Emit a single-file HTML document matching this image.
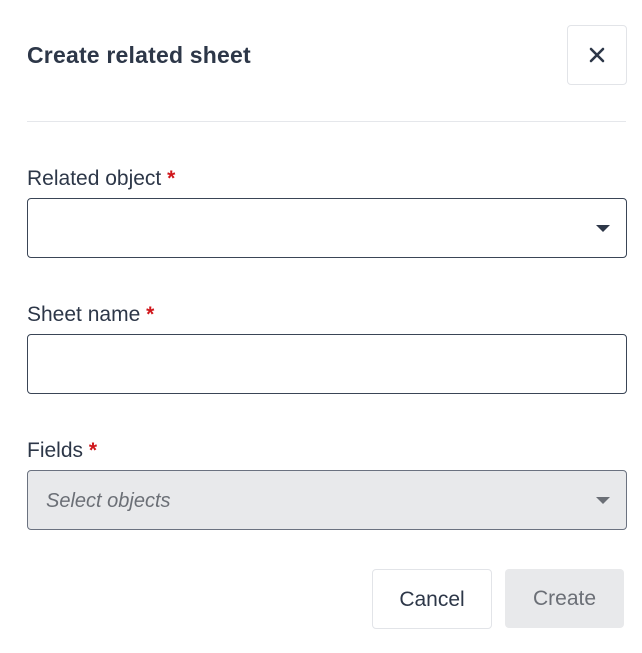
<!DOCTYPE html>
<html><head><style>
body{margin:0;width:642px;height:653px;background:#fff;font-family:"Liberation Sans",sans-serif;color:#2d3748;position:relative;overflow:hidden}
.a{position:absolute}
.title{left:27px;top:42px;font-size:23px;font-weight:bold;color:#2d3748;letter-spacing:0.2px}
.close{left:567px;top:25px;width:58px;height:58px;border:1px solid #e2e4e8;border-radius:4px}
.hr{left:27px;top:121px;width:599px;height:1px;background:#e5e7eb}
.lbl{left:27px;font-size:21px;color:#2d3748;letter-spacing:0px}
.lbl span{color:#d0161b;font-weight:bold}
.inp{left:27px;width:598px;height:58px;border:1px solid #3a4556;border-radius:4px;background:#fff}
.arr{position:absolute;right:16px;top:26px;width:0;height:0;border-left:7px solid transparent;border-right:7px solid transparent;border-top:7px solid #2d3748}
.btn{top:569px;height:58px;border-radius:4px;font-size:21px;text-align:center;line-height:60px}
</style></head><body>
<div class="a title">Create related sheet</div>
<div class="a close"><svg width="58" height="58" viewBox="0 0 58 58"><path d="M23 23L35 35M35 23L23 35" stroke="#2d3748" stroke-width="2.6" stroke-linecap="round"/></svg></div>
<div class="a hr"></div>
<div class="a lbl" style="top:167px">Related object <span>*</span></div>
<div class="a inp" style="top:198px"><div class="arr"></div></div>
<div class="a lbl" style="top:303px">Sheet name <span>*</span></div>
<div class="a inp" style="top:334px"></div>
<div class="a lbl" style="top:439px">Fields <span>*</span></div>
<div class="a inp" style="top:470px;background:#e8e9eb;border-color:#6b7280"><div style="position:absolute;left:18px;top:19px;font-size:20px;font-style:italic;color:#6b6f76">Select objects</div><div class="arr" style="border-top-color:#6b6f76"></div></div>
<div class="a btn" style="left:372px;width:118px;border:1px solid #e2e4e8;color:#2d3748">Cancel</div>
<div class="a btn" style="left:505px;width:119px;background:#e8e9eb;color:#6b6f76;height:59px">Create</div>
</body></html>
